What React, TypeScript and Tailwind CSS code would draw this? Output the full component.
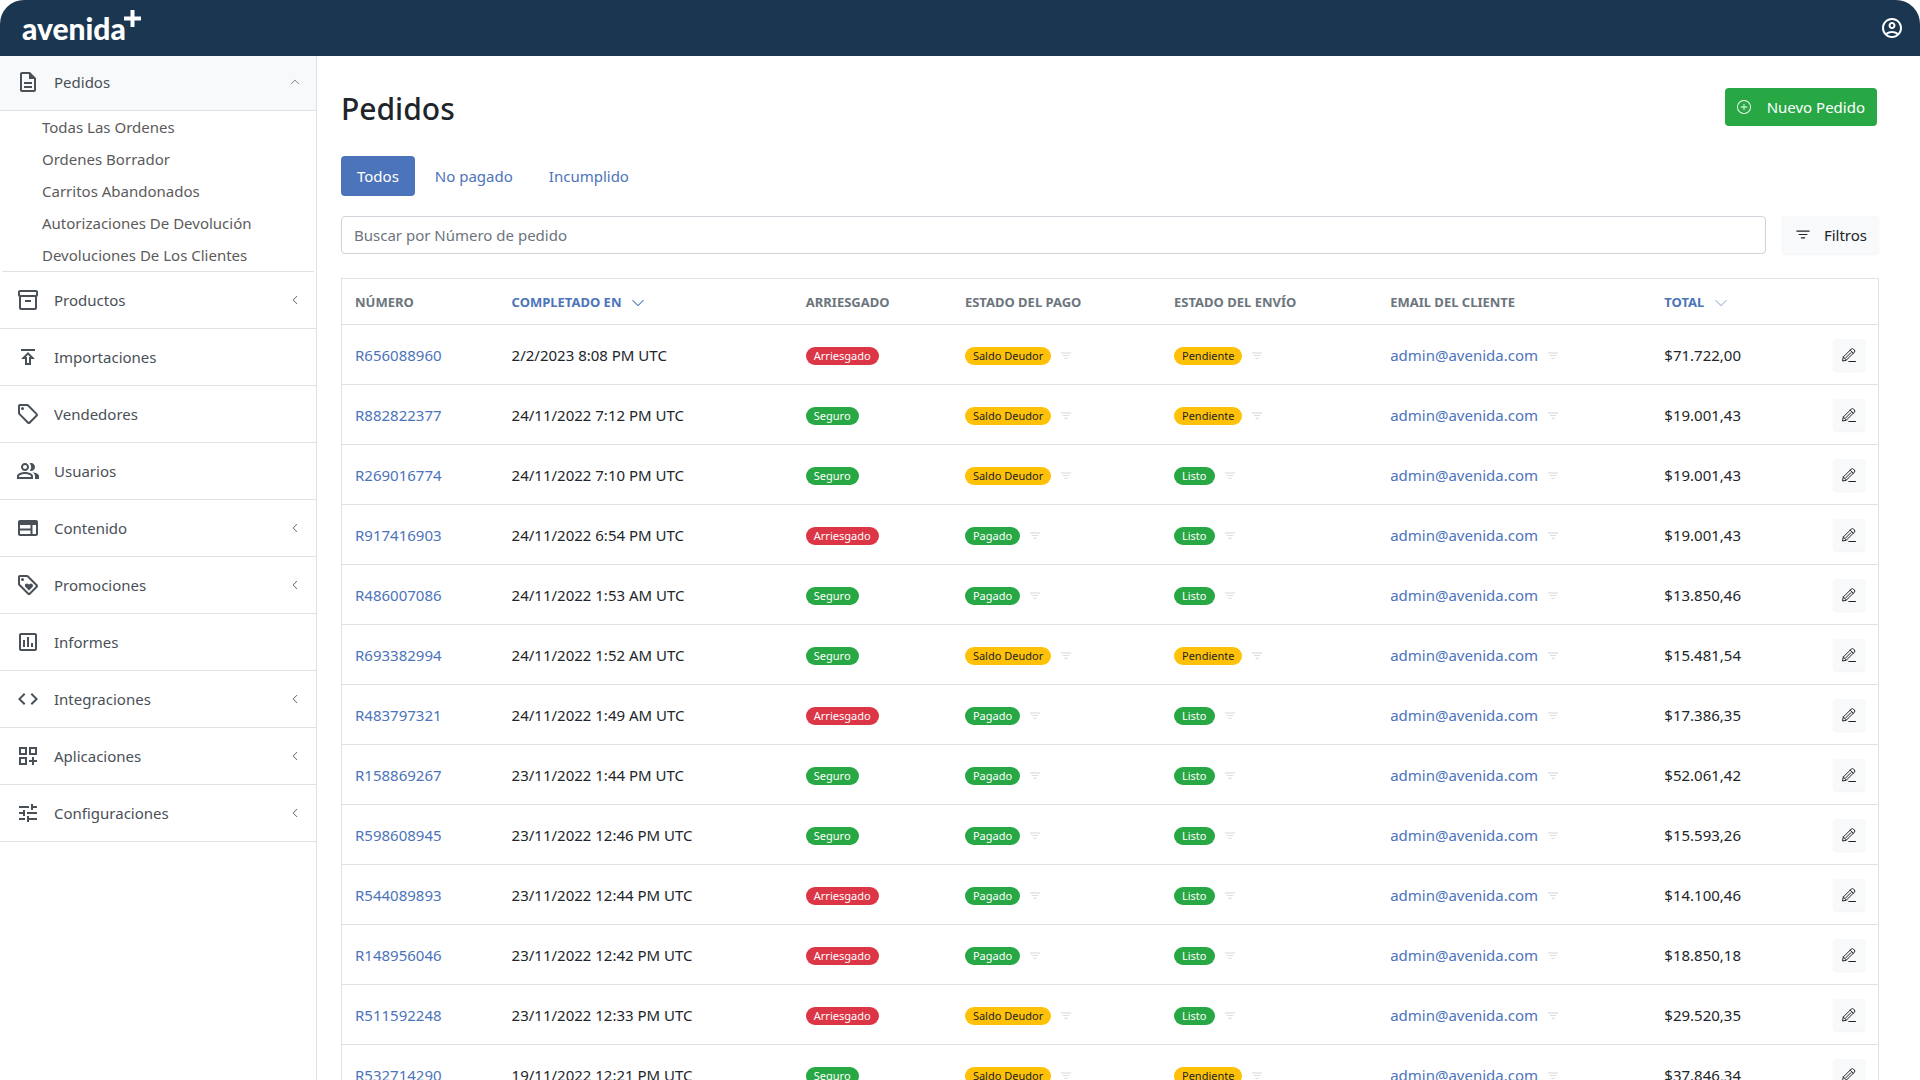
import React from "react"
import { clsx } from "clsx"
import {
	MdOutlineAccountCircle,
	MdOutlineAssessment,
	MdOutlineCode,
	MdOutlineDashboardCustomize,
	MdOutlineDescription,
	MdOutlineInventory2,
	MdOutlineLoyalty,
	MdOutlinePeopleAlt,
	MdOutlinePublish,
	MdOutlineSell,
	MdOutlineTune,
	MdOutlineWeb,
} from "react-icons/md"
import {
	BsChevronDown,
	BsChevronLeft,
	BsChevronUp,
	BsFilter,
	BsPlusCircle,
} from "react-icons/bs"

const subItems = [
	"Todas Las Ordenes",
	"Ordenes Borrador",
	"Carritos Abandonados",
	"Autorizaciones De Devolución",
	"Devoluciones De Los Clientes",
]

const menu = [
	{ label: "Productos", icon: MdOutlineInventory2, more: true },
	{ label: "Importaciones", icon: MdOutlinePublish, more: false },
	{ label: "Vendedores", icon: MdOutlineSell, more: false },
	{ label: "Usuarios", icon: MdOutlinePeopleAlt, more: false },
	{ label: "Contenido", icon: MdOutlineWeb, more: true },
	{ label: "Promociones", icon: MdOutlineLoyalty, more: true },
	{ label: "Informes", icon: MdOutlineAssessment, more: false },
	{ label: "Integraciones", icon: MdOutlineCode, more: true },
	{ label: "Aplicaciones", icon: MdOutlineDashboardCustomize, more: true },
	{ label: "Configuraciones", icon: MdOutlineTune, more: true },
]

const orders = [
	["R656088960", "2/2/2023 8:08 PM UTC", "Arriesgado", "Saldo Deudor", "Pendiente", "$71.722,00"],
	["R882822377", "24/11/2022 7:12 PM UTC", "Seguro", "Saldo Deudor", "Pendiente", "$19.001,43"],
	["R269016774", "24/11/2022 7:10 PM UTC", "Seguro", "Saldo Deudor", "Listo", "$19.001,43"],
	["R917416903", "24/11/2022 6:54 PM UTC", "Arriesgado", "Pagado", "Listo", "$19.001,43"],
	["R486007086", "24/11/2022 1:53 AM UTC", "Seguro", "Pagado", "Listo", "$13.850,46"],
	["R693382994", "24/11/2022 1:52 AM UTC", "Seguro", "Saldo Deudor", "Pendiente", "$15.481,54"],
	["R483797321", "24/11/2022 1:49 AM UTC", "Arriesgado", "Pagado", "Listo", "$17.386,35"],
	["R158869267", "23/11/2022 1:44 PM UTC", "Seguro", "Pagado", "Listo", "$52.061,42"],
	["R598608945", "23/11/2022 12:46 PM UTC", "Seguro", "Pagado", "Listo", "$15.593,26"],
	["R544089893", "23/11/2022 12:44 PM UTC", "Arriesgado", "Pagado", "Listo", "$14.100,46"],
	["R148956046", "23/11/2022 12:42 PM UTC", "Arriesgado", "Pagado", "Listo", "$18.850,18"],
	["R511592248", "23/11/2022 12:33 PM UTC", "Arriesgado", "Saldo Deudor", "Listo", "$29.520,35"],
	["R532714290", "19/11/2022 12:21 PM UTC", "Seguro", "Saldo Deudor", "Pendiente", "$37.846,34"],
]

const badgeColors: Record<string, string> = {
	Arriesgado: "bg-[#dc3545] text-white",
	Seguro: "bg-[#28a745] text-white",
	Pagado: "bg-[#28a745] text-white",
	Listo: "bg-[#28a745] text-white",
	"Saldo Deudor": "bg-[#ffc107] text-[#212529]",
	Pendiente: "bg-[#ffc107] text-[#212529]",
}

const Badge = ({ label }: { label: string }) => (
	<span
		className={clsx(
			"inline-flex h-[18px] items-center rounded-full px-2 text-[11px] leading-[18px]",
			badgeColors[label]
		)}>
		{label}
	</span>
)

const FilterButton = () => (
	<button type="button" aria-label="Filtrar" className="text-gray-300">
		<BsFilter size={14} />
	</button>
)

const PencilIcon = () => (
	<svg
		width="14"
		height="14"
		viewBox="0 0 14 14"
		fill="none"
		stroke="currentColor"
		strokeLinejoin="round"
		strokeLinecap="round"
		aria-hidden="true">
		<path d="M.6 12.6 1.3 9 9.3 1a1.5 1.5 0 0 1 2.1 0l1 1a1.5 1.5 0 0 1 0 2.1l-8 8Z" />
		<path d="m8.2 2.1 3.1 3.1M9 4.6 3.6 10M1.3 9l3 3" />
		<path d="M6.8 13.5h6.7" />
	</svg>
)

const Logo = () => (
	<a href="#" className="flex items-start text-white">
		<span className="font-['Lato'] text-[30px] leading-8 font-black">
			avenida
		</span>
		<svg
			width="17"
			height="17"
			viewBox="0 0 17 17"
			className="-mt-0.5 -ml-0.5"
			aria-hidden="true">
			<path d="M8.5 0v17M0 8.5h17" stroke="currentColor" strokeWidth="4" />
		</svg>
	</a>
)

const Sidebar = () => (
	<nav className="w-[317px] shrink-0 border-r border-[#dee2e6] text-[#495057]">
		<a
			href="#"
			className="flex h-[55px] items-center gap-[14px] border-b border-[#dee2e6] bg-[#f8f9fa] px-4 pb-0.5">
			<MdOutlineDescription size={24} />
			<span className="flex-1">Pedidos</span>
			<BsChevronUp size={10} />
		</a>
		<ul className="mx-0.5 border-b border-[#dee2e6] text-[#5b5b5b]">
			{subItems.map((item) => (
				<li key={item}>
					<a href="#" className="flex h-8 items-center pl-10">
						{item}
					</a>
				</li>
			))}
		</ul>
		<ul>
			{menu.map(({ label, icon: Icon, more }) => (
				<li key={label} className="border-b border-[#dee2e6]">
					<a href="#" className="flex h-14 items-center gap-[14px] px-4">
						<Icon size={24} />
						<span className="flex-1">{label}</span>
						{more && <BsChevronLeft size={10} />}
					</a>
				</li>
			))}
		</ul>
	</nav>
)

const OrdersTable = () => (
	<table className="mt-6 w-full table-fixed border border-[#dee2e6] text-left">
		<thead>
			<tr className="h-[46px] border-b border-[#dee2e6] text-[13px] text-[#6c757d] uppercase">
				<th className="w-[157px] px-[13px] pt-0.5">Número</th>
				<th className="w-[294px] px-[13px] pt-0.5 text-[#4c74ba]">
					<a href="#" className="flex items-center gap-2.5">
						Completado en
						<BsChevronDown size={14} />
					</a>
				</th>
				<th className="w-[159px] px-[13px] pt-0.5">Arriesgado</th>
				<th className="w-[209px] px-[13px] pt-0.5">Estado del pago</th>
				<th className="w-[216px] px-[13px] pt-0.5">Estado del envío</th>
				<th className="w-[274px] px-[13px] pt-0.5">Email del cliente</th>
				<th className="w-[120px] px-[13px] pt-0.5 text-[#4c74ba]">
					<a href="#" className="flex items-center gap-2.5">
						Total
						<BsChevronDown size={14} className="opacity-50" />
					</a>
				</th>
				<th className="w-[107px] px-[13px] pt-0.5" aria-label="Acciones" />
			</tr>
		</thead>
		<tbody>
			{orders.map(([number, date, risk, payment, shipment, total]) => (
				<tr key={number} className="h-[60px] border-b border-[#dee2e6]">
					<td className="px-[13px] pt-0.5">
						<a href="#" className="text-[#4c74ba]">
							{number}
						</a>
					</td>
					<td className="px-[13px] pt-0.5">{date}</td>
					<td className="px-[13px] pt-0.5">
						<div className="flex">
							<Badge label={risk} />
						</div>
					</td>
					<td className="px-[13px] pt-0.5">
						<div className="flex items-center gap-2">
							<Badge label={payment} />
							<FilterButton />
						</div>
					</td>
					<td className="px-[13px] pt-0.5">
						<div className="flex items-center gap-2">
							<Badge label={shipment} />
							<FilterButton />
						</div>
					</td>
					<td className="px-[13px] pt-0.5">
						<div className="flex items-center gap-2">
							<a href="#" className="text-[#4c74ba]">
								admin@avenida.com
							</a>
							<FilterButton />
						</div>
					</td>
					<td className="px-[13px] pt-0.5">{total}</td>
					<td className="px-[13px]">
						<button
							type="button"
							aria-label="Editar"
							className="ml-auto flex size-8 items-center justify-center rounded bg-[#f8f9fa] shadow-xs">
							<PencilIcon />
						</button>
					</td>
				</tr>
			))}
		</tbody>
	</table>
)

const App = () => {
	return (
		<div className="flex h-screen flex-col overflow-hidden bg-white font-['Noto_Sans',sans-serif] text-[15px] text-[#212529]">
			<header className="flex h-14 shrink-0 items-center justify-between rounded-t-3xl bg-[#1a3650] px-4 pl-[22px] text-white">
				<Logo />
				<button type="button" aria-label="Cuenta">
					<MdOutlineAccountCircle size={24} />
				</button>
			</header>
			<div className="flex min-h-0 flex-1">
				<Sidebar />
				<main className="min-w-0 flex-1 pt-8 pr-[41px] pl-6">
					<div className="flex items-start justify-between">
						<h1 className="text-[30px] leading-[42px] font-medium">Pedidos</h1>
						<button
							type="button"
							className="mr-0.5 flex h-[38px] items-center gap-4 rounded bg-[#28a745] px-3 text-white">
							<BsPlusCircle size={14} />
							Nuevo Pedido
						</button>
					</div>
					<div className="mt-[26px] flex gap-1">
						<button
							type="button"
							className="h-10 rounded bg-[#4c74ba] px-4 text-white">
							Todos
						</button>
						<button type="button" className="h-10 px-4 text-[#4c74ba]">
							No pagado
						</button>
						<button type="button" className="h-10 px-4 text-[#4c74ba]">
							Incumplido
						</button>
					</div>
					<div className="mt-5 flex gap-4">
						<input
							type="text"
							aria-label="Buscar por Número de pedido"
							placeholder="Buscar por Número de pedido"
							className="h-[38px] min-w-0 flex-1 rounded border border-[#ced4da] px-3 placeholder:text-[#6c757d]"
						/>
						<button
							type="button"
							className="flex h-[38px] items-center gap-3 rounded bg-[#f8f9fa] px-3 shadow-xs">
							<BsFilter size={18} />
							Filtros
						</button>
					</div>
					<OrdersTable />
				</main>
			</div>
		</div>
	)
}

export default App
